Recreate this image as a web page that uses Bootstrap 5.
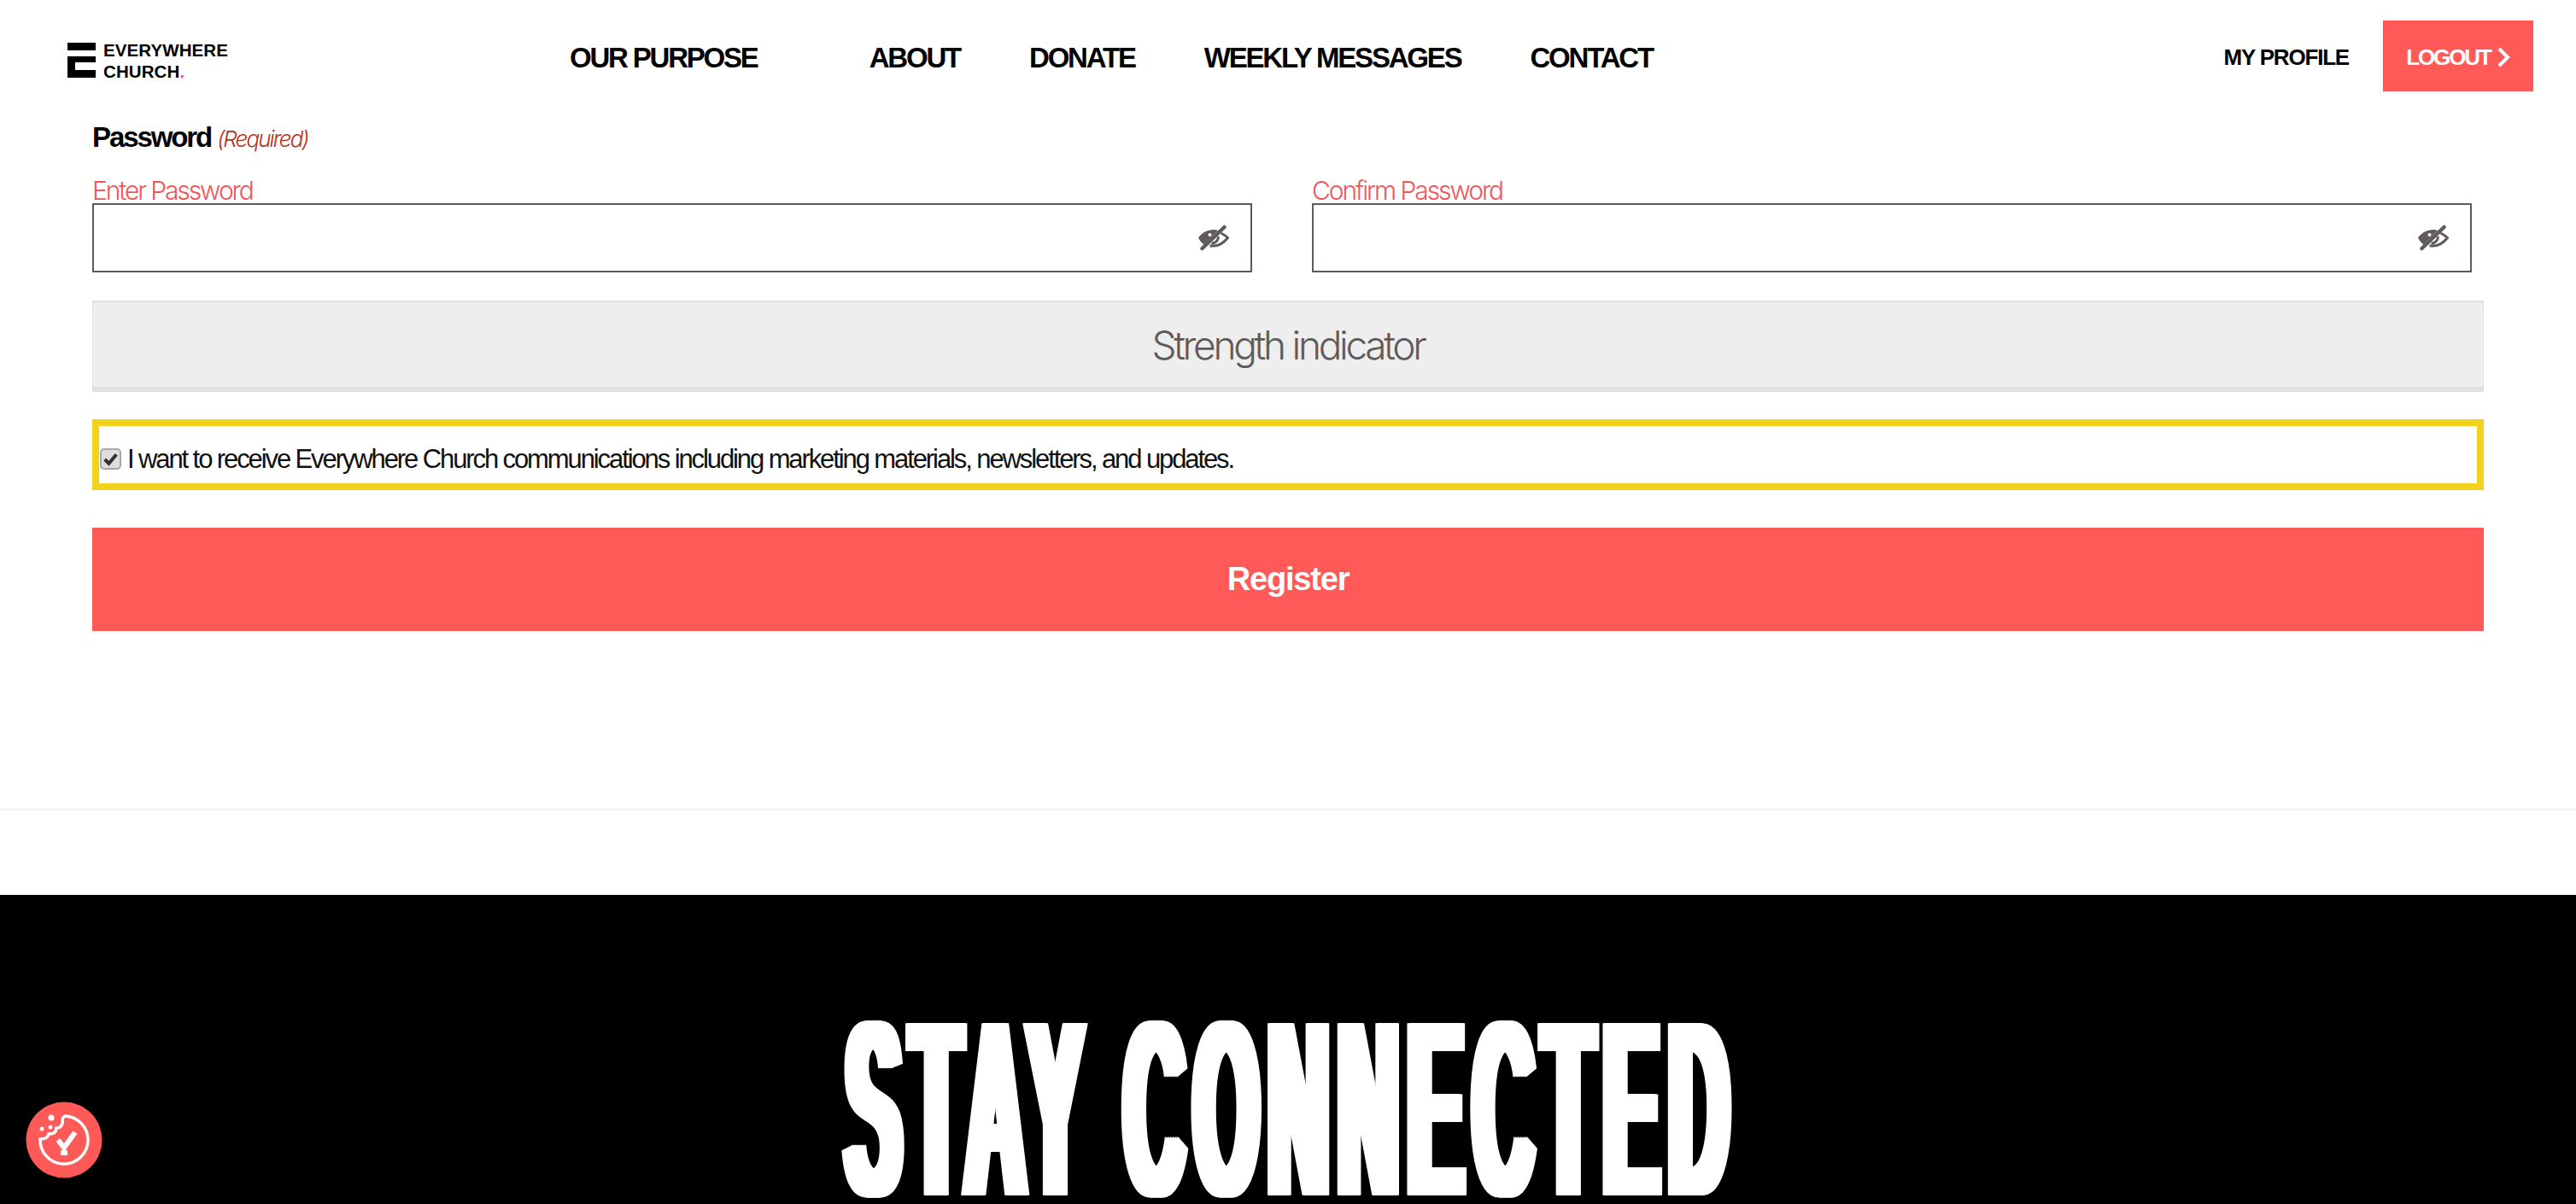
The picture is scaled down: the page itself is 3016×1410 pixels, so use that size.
<!DOCTYPE html>
<html lang="en">
<head>
	<meta charset="UTF-8" />
	<meta name="viewport" content="width=device-width, initial-scale=1.0"/>
	<title>Everywhere Church - Register</title>

	<!-- Bootstrap CSS -->
	<link href="https://cdn.jsdelivr.net/npm/bootstrap@5.3.0/dist/css/bootstrap.min.css" rel="stylesheet" />

	<style>
		body { font-family: "Liberation Sans", Arial, sans-serif; color: #000; background: #fff; height: 1410px; overflow: hidden; }

		/* header */
		.site-nav { height: 131px; padding: 24px 50px 24px 79px; align-items: flex-start; flex-wrap: nowrap; }
		.brand-box { width: 588px; height: 83px; padding: 26px 0 0; margin: 0; }
		.brand-text { font-size: 20.5px; font-weight: 700; line-height: 25px; margin: -4px 0 0 9px; letter-spacing: .1px; color: #000; }
		.brand-dot { color: #ff5a57; }
		.main-links { gap: 81px; height: 83px; margin-top: 2px; }
		.main-links .nav-link { padding: 0; font-size: 33px; font-weight: 700; letter-spacing: -2.2px; color: #000; line-height: 83px; white-space: nowrap; }
		.main-links .nav-item:first-child { margin-right: 50px; }
		.profile-link { font-size: 26px; font-weight: 700; letter-spacing: -1.2px; color: #000; text-decoration: none; margin: 4px 40px 0 0; }
		.logout-btn { width: 176px; height: 83px; background: #ff5a57; color: #fff; font-size: 26px; font-weight: 700; letter-spacing: -2.1px; border: 0; border-radius: 0; padding: 3px 0 0; }
		.logout-btn:hover { background: #ff5a57; color: #fff; }

		/* form */
		.form-wrap { padding: 0 108px; }
		.pw-heading { font-size: 33px; font-weight: 700; letter-spacing: -2.1px; line-height: 36px; margin: 12px 0 0; }
		.req-note { font-family: "Inter", sans-serif; font-size: 26px; font-weight: 300; font-style: italic; letter-spacing: -1.9px; color: #b5311a; }
		.pw-grid { display: grid; grid-template-columns: 1fr 1fr; column-gap: 70px; padding-right: 14px; margin-top: 27px; }
		.pw-label { display: block; font-family: "Inter", sans-serif; font-size: 30px; font-weight: 300; letter-spacing: -2.1px; line-height: 30px; color: #f0555a; margin: 0; }
		.pw-input { height: 81px; border: 2px solid #5f5b5c; border-radius: 0; padding-right: 70px; }
		.eye-icon { position: absolute; right: 27px; top: 25px; width: 37px; height: 32px; }
		.strength-bar { height: 107px; margin-top: 33px; padding-top: 2px; background: #eee; border: 1px solid #e0e0e0; border-top-width: 2px; border-bottom-width: 6px; display: flex; align-items: center; justify-content: center; font-family: "Inter", sans-serif; font-weight: 300; font-size: 46px; letter-spacing: -3.3px; color: #5f5b5c; }
		.consent-box { height: 83px; margin-top: 32px; border: 8px solid #f2d21f; padding: 10px 0 0 1px; display: flex; align-items: center; }
		.consent-box .form-check-input { width: 25px; height: 25px; margin: 0 7px 0 0; flex: none; background-color: #dedede; border: 2px solid #a8a8a8; border-radius: 5px; background-image: url("data:image/svg+xml,%3Csvg xmlns='http://www.w3.org/2000/svg' viewBox='0 0 20 20'%3E%3Cpath fill='none' stroke='%23333' stroke-width='4' d='M3.500 10.500l4.500 4.500 8.500-10'/%3E%3C/svg%3E"); opacity: 1; }
		.consent-box label { font-size: 31px; letter-spacing: -2.1px; color: #111; white-space: nowrap; margin-top: 1px; }
		.register-btn { display: block; width: 100%; height: 121px; margin-top: 44px; background: #ff5a57; color: #fff; font-size: 38px; font-weight: 700; letter-spacing: -1.2px; border: 0; border-radius: 0; }
		.register-btn:hover { background: #ff5a57; color: #fff; }

		/* footer */
		.foot-line { height: 2px; margin: 208px 0 0; background: #f3f3f3; }
		.stay-band { margin-top: 99px; height: 362px; background: #000; overflow: hidden; display: flex; justify-content: center; }
		/* squeezed and thickened sideways, the reference is an ultra condensed face */
		.stay-title { flex: none; height: 130px; margin: 185px 0 0 10px; color: #fff; font-size: 190px; line-height: 130px; font-weight: 700; letter-spacing: 23px; white-space: nowrap; transform: scale(.51, 1.54);
			text-shadow: 3px 0 #fff, -3px 0 #fff, 6px 0 #fff, -6px 0 #fff, 9px 0 #fff, -9px 0 #fff, 12px 0 #fff, -12px 0 #fff, 15px 0 #fff, -15px 0 #fff; }
		.cookie-btn { position: fixed; left: 30px; top: 1290px; width: 90px; height: 90px; padding: 0; border: 0; background: none; }
	</style>

	<!-- Bootstrap JS bundle -->
	<script src="https://cdn.jsdelivr.net/npm/bootstrap@5.3.0/dist/js/bootstrap.bundle.min.js"></script>
</head>

<body>
	<nav class="navbar site-nav bg-white">
		<a class="d-flex brand-box text-decoration-none" href="#">
			<svg width="33" height="41" viewBox="0 0 33 41" class="flex-shrink-0">
				<rect x="0" y="0" width="33" height="9" fill="#000"/>
				<path d="M0 16h33v7H9v9h24v9H0z" fill="#000"/>
			</svg>
			<span class="brand-text">EVERYWHERE<br/>CHURCH<span class="brand-dot">.</span></span>
		</a>
		<ul class="nav main-links align-items-center flex-nowrap">
			<li class="nav-item"><a class="nav-link" href="#">OUR PURPOSE</a></li>
			<li class="nav-item"><a class="nav-link" href="#">ABOUT</a></li>
			<li class="nav-item"><a class="nav-link" href="#">DONATE</a></li>
			<li class="nav-item"><a class="nav-link" href="#">WEEKLY MESSAGES</a></li>
			<li class="nav-item"><a class="nav-link" href="#">CONTACT</a></li>
		</ul>
		<div class="d-flex align-items-center ms-auto">
			<a class="profile-link" href="#">MY PROFILE</a>
			<button class="btn logout-btn d-flex align-items-center justify-content-center gap-2" type="button">LOGOUT
				<svg width="15" height="24" viewBox="0 0 15 24"><path d="M2 2l10 10-10 10" fill="none" stroke="#fff" stroke-width="4"/></svg>
			</button>
		</div>
	</nav>

	<main class="form-wrap">
		<p class="pw-heading">Password <span class="req-note">(Required)</span></p>

		<div class="pw-grid">
			<div>
				<label class="pw-label" for="pw1">Enter Password</label>
				<div class="position-relative">
					<input id="pw1" type="password" class="form-control pw-input" />
					<svg class="eye-icon" viewBox="0 0 36 32">
						<path fill="#5f5b5c" d="M.5 15.5C5 9.5 11 6 18 6c2 0 4 .3 5.5 1L7 23.5C4.500 21.500 2 18.500 .5 15.500z"/>
						<circle cx="14" cy="12" r="2" fill="#fff"/>
						<path fill="none" stroke="#5f5b5c" stroke-width="3" d="M27 10c3 1.500 6 3.500 8 5.500-4 5-10 9.500-17 9.500h-4M24 14c0 5-4 8-8 8"/>
						<path stroke="#5f5b5c" stroke-width="4.500" stroke-linecap="round" d="M5 28L31 3"/>
					</svg>
				</div>
			</div>
			<div>
				<label class="pw-label" for="pw2">Confirm Password</label>
				<div class="position-relative">
					<input id="pw2" type="password" class="form-control pw-input" />
					<svg class="eye-icon" viewBox="0 0 36 32">
						<path fill="#5f5b5c" d="M.5 15.5C5 9.5 11 6 18 6c2 0 4 .3 5.5 1L7 23.5C4.500 21.500 2 18.500 .5 15.500z"/>
						<circle cx="14" cy="12" r="2" fill="#fff"/>
						<path fill="none" stroke="#5f5b5c" stroke-width="3" d="M27 10c3 1.500 6 3.500 8 5.500-4 5-10 9.500-17 9.500h-4M24 14c0 5-4 8-8 8"/>
						<path stroke="#5f5b5c" stroke-width="4.500" stroke-linecap="round" d="M5 28L31 3"/>
					</svg>
				</div>
			</div>
		</div>

		<div class="strength-bar">Strength indicator</div>

		<div class="consent-box">
			<input id="consent" class="form-check-input" type="checkbox" checked />
			<label for="consent">I want to receive Everywhere Church communications including marketing materials, newsletters, and updates.</label>
		</div>

		<button class="btn register-btn" type="button">Register</button>
	</main>

	<div class="foot-line"></div>

	<section class="stay-band">
		<h2 class="stay-title">STAY CONNECTED</h2>
	</section>

	<button class="cookie-btn" type="button" aria-label="Cookie preferences">
		<svg width="90" height="90" viewBox="0 0 90 90">
			<circle cx="45" cy="45" r="44.5" fill="#ff5a57"/>
			<path fill="none" stroke="#fff" stroke-width="3.5" d="M46 17A28 28 0 1 1 17 44C22 44 26 42 27 38C32 38 36 36 36 31C41 31 44 27 43 22C43 20 44 18 46 17Z"/>
			<circle cx="30" cy="19" r="3.500" fill="#fff"/>
			<circle cx="19" cy="32" r="2.500" fill="#fff"/>
			<circle cx="29" cy="30" r="2.500" fill="#fff"/>
			<path fill="none" stroke="#fff" stroke-width="6" d="M38 45l7 9 13-18"/>
			<rect x="41" y="57" width="8" height="6" fill="#fff"/>
		</svg>
	</button>
</body>
</html>
